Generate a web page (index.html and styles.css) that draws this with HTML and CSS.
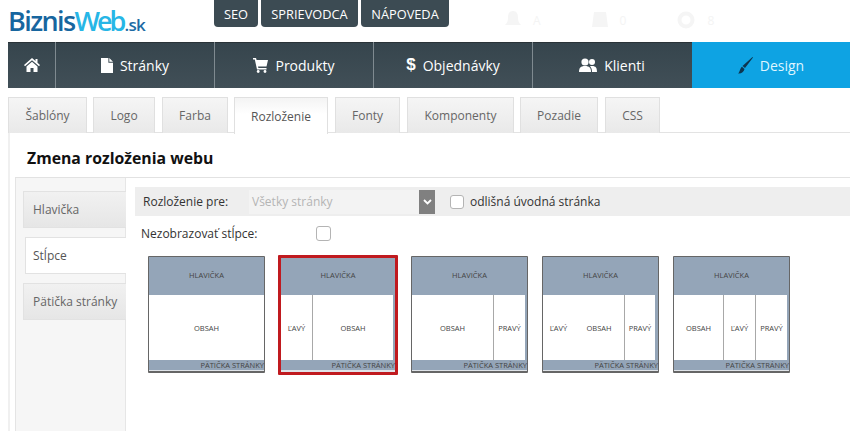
FILE: index.html
```html
<!DOCTYPE html>
<html lang="sk">
<head>
<meta charset="utf-8">
<title>BiznisWeb.sk</title>
<link rel="stylesheet" href="styles.css">
</head>
<body>
<header class="top">
  <div class="logo"><span class="logo-a">Biznis</span><span class="logo-b">Web</span><span class="logo-c">.sk</span></div>
  <div class="top-buttons">
    <a class="top-btn">SEO</a>
    <a class="top-btn">SPRIEVODCA</a>
    <a class="top-btn">NÁPOVEDA</a>
  </div>
  <div class="ghosts">
    <span class="ghost"><svg width="18" height="20" viewBox="0 0 18 20"><path d="M9 1c-4 0-5 3-5 7 0 3-1 5-3 7h16c-2-2-3-4-3-7 0-4-1-7-5-7z" fill="#f5f5f5"/></svg>A</span>
    <span class="ghost"><svg width="18" height="20" viewBox="0 0 18 20"><path d="M3 2h12l2 15H1z" fill="#f5f5f5"/></svg>0</span>
    <span class="ghost"><svg width="20" height="20" viewBox="0 0 20 20"><circle cx="10" cy="10" r="6.5" fill="none" stroke="#f5f5f5" stroke-width="4"/></svg>8</span>
  </div>
</header>

<nav class="nav">
  <a class="nav-item nav-home"><svg width="16" height="14" viewBox="0 0 16 14"><path d="M8 0 0 7l1 1.200 7-6 7 6L16 7l-2.500-2.200V1h-2v2zM2.500 8.500V14h4v-4h3v4h4V8.500L8 3.800z" fill="#fff"/></svg></a>
  <a class="nav-item"><svg width="12" height="15" viewBox="0 0 13 16"><path d="M0 0h8v5h5v11H0zM9 0l4 4H9z" fill="#fff"/></svg>Stránky</a>
  <a class="nav-item"><svg width="15" height="15" viewBox="0 0 15 15"><path d="M0 0h3l.6 2H15l-1.500 6.500H5l.4 1.500H13.500v1.500H4L1.800 1.500H0z" fill="#fff"/><circle cx="5.200" cy="13.500" r="1.400" fill="#fff"/><circle cx="12" cy="13.500" r="1.400" fill="#fff"/></svg>Produkty</a>
  <a class="nav-item"><b class="dollar">$</b>Objednávky</a>
  <a class="nav-item"><svg width="18" height="14" viewBox="0 0 18 14"><circle cx="6" cy="4" r="3.600" fill="#fff"/><path d="M0 14c0-4 1.500-6 6-6s6 2 6 6z" fill="#fff"/><circle cx="13" cy="4" r="3" fill="#fff"/><path d="M13 14h5c0-4-1-6-5-6-1 0-1.500 .2-2 .4 1.500 1.200 2 3 2 5.600z" fill="#fff"/></svg>Klienti</a>
  <a class="nav-item nav-active"><svg width="15" height="17" viewBox="0 0 15 17"><path d="M14.500 0 15 .5 7 11 4.500 9zM4 9.700 6.500 12C6 15 3 17 0 16.500 2 15 2 11 4 9.700z" fill="#0d3550"/></svg>Design</a>
</nav>

<div class="tabs">
  <a class="tab t1">Šablóny</a>
  <a class="tab t2">Logo</a>
  <a class="tab t3">Farba</a>
  <a class="tab t4 tab-active">Rozloženie</a>
  <a class="tab t5">Fonty</a>
  <a class="tab t6">Komponenty</a>
  <a class="tab t7">Pozadie</a>
  <a class="tab t8">CSS</a>
</div>

<main class="content">
  <h1 class="title">Zmena rozloženia webu</h1>
  <section class="panel">
    <aside class="side">
      <a class="side-item">Hlavička</a>
      <a class="side-item side-active">Stĺpce</a>
      <a class="side-item">Pätička stránky</a>
    </aside>
    <div class="main">
      <div class="toolbar">
        <span class="tb-label">Rozloženie pre:</span>
        <div class="select"><span>Všetky stránky</span><i class="arrow"><svg width="9" height="6" viewBox="0 0 9 6"><path d="M1 1l3.500 3.500L8 1" fill="none" stroke="#fff" stroke-width="1.800"/></svg></i></div>
        <i class="check"></i>
        <span class="tb-text">odlišná úvodná stránka</span>
      </div>
      <div class="hide-row">
        <span class="hide-label">Nezobrazovať stĺpce:</span>
        <i class="check check-b"></i>
      </div>
      <div class="layouts">
        <div class="thumb">
          <div class="th-head">HLAVIČKA</div>
          <div class="th-body"><div class="col grow">OBSAH</div></div>
          <div class="th-foot">PÄTIČKA STRÁNKY</div>
        </div>
        <div class="thumb thumb-sel">
          <div class="th-head">HLAVIČKA</div>
          <div class="th-body"><div class="col side-col">ĽAVÝ</div><div class="col grow">OBSAH</div><div class="strip"></div></div>
          <div class="th-foot">PÄTIČKA STRÁNKY</div>
        </div>
        <div class="thumb">
          <div class="th-head">HLAVIČKA</div>
          <div class="th-body"><div class="col grow">OBSAH</div><div class="col side-col">PRAVÝ</div><div class="strip"></div></div>
          <div class="th-foot">PÄTIČKA STRÁNKY</div>
        </div>
        <div class="thumb thumb-wide-strip">
          <div class="th-head">HLAVIČKA</div>
          <div class="th-body"><div class="col side-col">ĽAVÝ</div><div class="col grow">OBSAH</div><div class="col side-col">PRAVÝ</div><div class="strip"></div></div>
          <div class="th-foot">PÄTIČKA STRÁNKY</div>
        </div>
        <div class="thumb">
          <div class="th-head">HLAVIČKA</div>
          <div class="th-body"><div class="col grow">OBSAH</div><div class="col side-col">ĽAVÝ</div><div class="col side-col">PRAVÝ</div><div class="strip"></div></div>
          <div class="th-foot">PÄTIČKA STRÁNKY</div>
        </div>
      </div>
    </div>
  </section>
</main>
</body>
</html>
```
FILE: styles.css
```css
* { box-sizing: border-box; }
html, body { margin: 0; height: 431px; overflow: hidden; background: #fff; }
body { font-family: "Open Sans", sans-serif; color: #333; }

.top { display: flex; height: 42px; }
.logo { width: 214px; padding: 7px 0 0 8px; font-weight: 600; font-size: 27px; line-height: 28px; letter-spacing: -1.6px; white-space: nowrap; }
.logo-a { color: #17669f; }
.logo-b { color: #27b6e6; letter-spacing: -3px; }
.logo-c { color: #1c6ba4; font-size: 17px; letter-spacing: -.6px; margin-left: 1px; }
.top-buttons { display: flex; gap: 3px; height: 27px; }
.top-btn { display: flex; align-items: center; justify-content: center; height: 27px; background: #3c4b53; color: #fff; font-size: 12.8px; border-radius: 0 0 4px 4px; }
.top-btn:nth-child(1) { width: 44px; }
.top-btn:nth-child(2) { width: 97px; }
.top-btn:nth-child(3) { width: 88px; }
.ghosts { display: flex; gap: 50px; margin-left: 55px; height: 30px; align-items: center; padding-top: 10px; font-size: 12px; color: #f4f4f4; }
.ghost { display: flex; align-items: center; gap: 11px; }

.nav { display: flex; height: 46px; margin-left: 8px; background: linear-gradient(#36454d, #414f57); border-top: 1px solid #2a3338; }
.nav-item { display: flex; align-items: center; justify-content: center; gap: 7px; width: 159px; color: #fff; font-size: 14px; border-left: 1px solid #7f8a90; margin-top: -1px; }
.nav-home { width: 47px; border-left: 0; }
.nav-item svg { flex: none; }
.dollar { font-family: "Liberation Sans", sans-serif; font-size: 17px; }
.nav-active { flex: 1; background: #0ea3e3; color: #dff5ff; border-left: 0; margin-left: 1px; }

.tabs { display: flex; margin: 9px 0 0 8px; height: 36px; border-bottom: 1px solid #e3e3e3; }
.tab { display: flex; align-items: center; justify-content: center; height: 36px; font-size: 12px; color: #666; background: linear-gradient(#f5f5f5, #e9e9e9); border: 1px solid #e0e0e0; border-bottom: 0; }
.t1 { width: 79px; }
.t2 { width: 62px; margin-left: 6px; }
.t3 { width: 66px; margin-left: 7px; }
.t4 { width: 94px; margin-left: 6px; }
.t5 { width: 65px; margin-left: 7px; }
.t6 { width: 107px; margin-left: 7px; }
.t7 { width: 78px; margin-left: 6px; }
.t8 { width: 55px; margin-left: 7px; }
.tab-active { background: linear-gradient(#f4f4f4, #fff 45%); color: #555; height: 37px; position: relative; z-index: 1; }

.content { margin-left: 8px; border-left: 2px solid #f0f0f0; height: 299px; }
.title { margin: 0; padding: 14px 0 0 17px; font-size: 15.8px; line-height: 22px; font-weight: 700; color: #111; height: 44px; }
.panel { display: flex; margin-left: 5px; height: 255px; border-top: 1px solid #e2e2e2; }
.side { width: 111px; flex: none; padding-top: 13px; background: #f6f6f6; border-left: 1px solid #e4e4e4; border-right: 1px solid #e6e6e6; display: flex; flex-direction: column; gap: 9px; align-items: flex-end; }
.side-item { display: flex; align-items: center; height: 37px; padding-left: 9px; width: 103px; margin-right: -1px; font-size: 12px; color: #666; background: linear-gradient(#f1f1f1, #e6e6e6); border: 1px solid #e2e2e2; border-right: 0; }
.side-active { background: #fff; width: 101px; padding-left: 7px; color: #555; position: relative; }
.main { flex: 1; padding: 9px 0 0 9px; }
.toolbar { display: flex; align-items: center; height: 29px; background: #eeeeee; }
.tb-label { width: 114px; padding-left: 8px; font-size: 12px; color: #333; flex: none; }
.select { display: flex; align-items: center; justify-content: space-between; width: 186px; height: 24px; background: #f3f3f3; font-size: 12px; color: #b5b5b5; padding-left: 3px; }
.arrow { display: flex; align-items: center; justify-content: center; width: 16px; height: 24px; background: #808080; }
.check { display: block; width: 14px; height: 14px; background: #fff; border: 1.500px solid #b4b4b4; border-radius: 3px; flex: none; }
.toolbar .check { margin-left: 15px; }
.tb-text { margin-left: 6px; font-size: 12px; color: #333; }
.hide-row { display: flex; align-items: center; height: 21px; margin-top: 7px; }
.hide-label { width: 181px; padding-left: 6px; font-size: 12px; color: #333; flex: none; }
.check-b { width: 15px; height: 15px; }

.layouts { display: flex; align-items: flex-start; gap: 13px; margin-top: 12px; padding-left: 13px; }
.thumb { width: 117px; height: 117px; border: 1px solid #666; border-bottom-width: 2px; background: #94a5b8; display: flex; flex-direction: column; font-size: 7.500px; color: #444; border-radius: 1px; flex: none; }
.thumb:nth-child(n+4) { margin-left: 1px; }
.th-head { height: 38px; flex: none; display: flex; align-items: center; justify-content: center; padding-bottom: 2px; }
.th-body { height: 65px; flex: none; display: flex; background: #94a5b8; }
.col { display: flex; align-items: center; justify-content: center; background: #fff; height: 100%; }
.grow { flex: 1; }
.side-col { width: 32px; border-left: 1px solid #a8a8a8; }
.col:first-child { border-left: 0; }
.strip { width: 2px; flex: none; }
.th-foot { height: 11px; line-height: 10px; text-align: right; font-size: 7.500px; white-space: nowrap; border-bottom: 1px solid #dfe3e8; }
.thumb-wide-strip .side-col { width: 31px; }
.thumb-wide-strip .strip { width: 3px; }
.thumb-sel { width: 120px; height: 120px; margin-top: -1px; border: 3px solid #c01a1f; }
.thumb-sel .th-head { height: 37px; padding-bottom: 3px; }
.thumb-sel .side-col { border-right: 1px solid #a8a8a8; }
.thumb-sel .th-foot { border-bottom-width: 2px; height: 12px; }
```
